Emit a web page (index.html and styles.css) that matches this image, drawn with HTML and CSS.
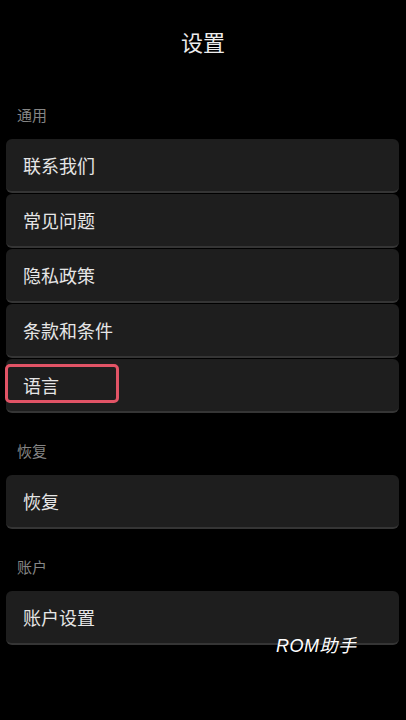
FILE: index.html
```html
<!DOCTYPE html>
<html>
<head>
  <meta charset="utf-8">
  <title>设置</title>
  <link rel="stylesheet" href="styles.css">
</head>
<body>
  <div class="screen">
    <div class="title">设置</div>

    <!-- 通用 -->
    <div class="group">
      <div class="label">通用</div>
      <div class="row">联系我们</div>
      <div class="row">常见问题</div>
      <div class="row">隐私政策</div>
      <div class="row">条款和条件</div>
      <div class="row">语言<span class="mark"></span></div>
    </div>

    <!-- 恢复 -->
    <div class="group">
      <div class="label">恢复</div>
      <div class="row">恢复</div>
    </div>

    <!-- 账户 -->
    <div class="group">
      <div class="label">账户</div>
      <div class="row">账户设置</div>
    </div>

    <div class="watermark">ROM助手</div>
  </div>
</body>
</html>
```

FILE: styles.css
```css
body {
  margin: 0;
  background: #000;
  font-family: "Noto Sans CJK SC", "Noto Sans", sans-serif;
}

.screen {
  position: relative;
  width: 406px;
  height: 720px;
  overflow: hidden;
}

.title {
  height: 86px;
  line-height: 82px;
  text-align: center;
  font-size: 22px;
  color: #ececec;
}

.group { margin-top: 28px; }
.title + .group { margin-top: 19px; }

.label {
  height: 20px;
  line-height: 20px;
  padding-left: 17px;
  margin-bottom: 14px;
  font-size: 15px;
  color: #858585;
}

.row {
  position: relative;
  margin: 0 7px 1px 6px;
  height: 52px;
  line-height: 52px;
  padding-left: 17px;
  background: #1e1e1e;
  border-bottom: 2px solid #353535;
  border-radius: 6px;
  font-size: 18px;
  color: #e6e6e6;
}

.row:last-child { margin-bottom: 0; }

/* red highlight box round "语言" */
.mark {
  position: absolute;
  left: -1px;
  top: 5px;
  width: 108px;
  height: 33px;
  border: 3px solid #e25466;
  border-radius: 5px;
}

.watermark {
  position: absolute;
  left: 276px;
  top: 634px;
  font-family: "Liberation Sans", "Noto Sans CJK SC", sans-serif;
  font-size: 18px;
  font-style: italic;
  letter-spacing: 0.5px;
  color: #fff;
  line-height: 24px;
}
```
